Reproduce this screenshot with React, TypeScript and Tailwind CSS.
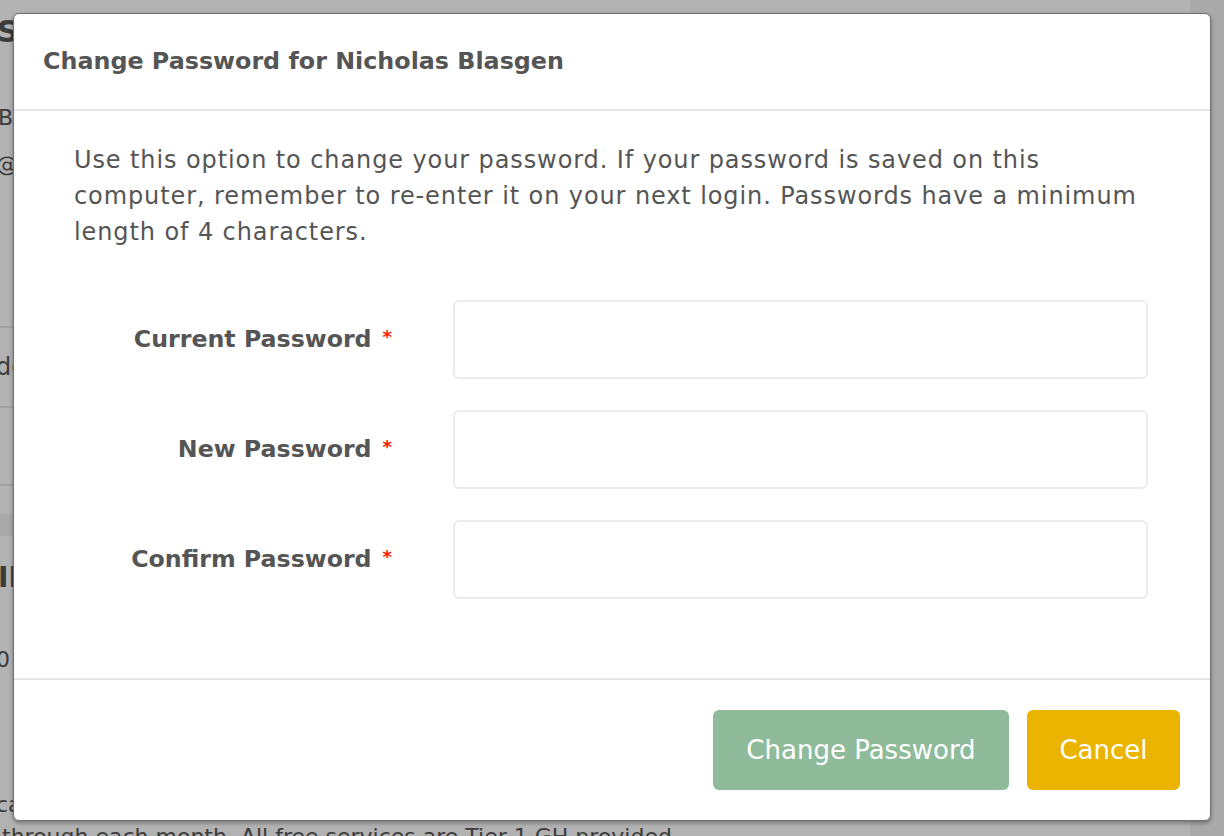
import React from "react";

const font = { fontFamily: '"DejaVu Sans", "Noto Sans", sans-serif' };

function Field({ label }: { label: string }) {
  return (
    <div className="flex items-center">
      <div className="w-[318px] shrink-0 text-right text-[23.7px] font-bold text-[#555555] leading-none whitespace-nowrap">
        {label}
        <span className="relative -top-[4px] ml-[11px] text-[18px] text-[#ff1a00]">*</span>
      </div>
      <div className="ml-[61px] flex-1 h-[79px] rounded-[6px] border-2 border-[#ececec] bg-white" />
    </div>
  );
}

export default function App() {
  return (
    <div className="relative w-[1224px] h-[836px] overflow-hidden bg-white" style={font}>
      {/* background page */}
      <div className="flex h-full">
        <div className="flex-1 text-[#555555] whitespace-nowrap">
          <div className="h-[14px]" />
          <div className="text-[30px] font-bold leading-[36px] -ml-[3px]">Security</div>
          <div className="mt-[53px] text-[22px] leading-[30px] -ml-[2px]">Basic</div>
          <div className="mt-[17px] text-[22px] leading-[30px] -ml-[4px]">@</div>
          <div className="mt-[146px] h-[2px] bg-[#e6e6e6]" />
          <div className="h-[78px] flex items-center text-[24px] -ml-[4px]">domain</div>
          <div className="h-[2px] bg-[#e6e6e6]" />
          <div className="h-[76px]" />
          <div className="h-[2px] bg-[#e6e6e6]" />
          <div className="mt-[28px] h-[22px] bg-[#f2f2f2]" />
          <div className="mt-[24px] text-[28px] font-bold leading-[36px] -ml-[2px]">IP Access</div>
          <div className="mt-[49px] text-[22px] leading-[30px] -ml-[4px]">0</div>
          <div className="mt-[115px] text-[22px] leading-[30px] -ml-[4px]">cap</div>
          <div className="mt-[2px] text-[22px] leading-[30px] ml-[2px]">through each month. All free services are Tier 1 GH provided</div>
        </div>
        <div className="w-[34px] bg-[#f2f2f2]" />
      </div>
      {/* overlay */}
      <div className="absolute inset-0 bg-black/30" />
      {/* modal */}
      <div className="absolute left-[13px] top-[13px] w-[1198px] h-[808px] rounded-[6px] border border-[#6f6f6f] bg-white flex flex-col shadow-[0_2px_4px_rgba(0,0,0,0.35)] overflow-hidden">
        <div className="h-[97px] shrink-0 flex items-center pl-[29px] border-b-2 border-[#e5e5e5]">
          <h1 className="text-[23.8px] font-bold text-[#555555]">Change Password for Nicholas Blasgen</h1>
        </div>
        <div className="flex-1 px-[60px] pt-[31px] border-b-2 border-[#e5e5e5]">
          <p className="text-[24px] leading-[36px] tracking-[0.9px] text-[#555555]">
            <span className="block whitespace-nowrap">Use this option to change your password. If your password is saved on this</span>
            <span className="block whitespace-nowrap">computer, remember to re-enter it on your next login. Passwords have a minimum</span>
            <span className="block whitespace-nowrap">length of 4 characters.</span>
          </p>
          <div className="mt-[50px] flex flex-col gap-[31px] pr-[2px]">
            <Field label="Current Password" />
            <Field label="New Password" />
            <Field label="Confirm Password" />
          </div>
        </div>
        <div className="h-[140px] shrink-0 flex items-center justify-end gap-[18px] pr-[30px]">
          <button className="w-[296px] h-[80px] rounded-[6px] bg-[#8fbb9a] text-white text-[26px]">Change Password</button>
          <button className="w-[153px] h-[80px] rounded-[6px] bg-[#ebb400] text-white text-[26px]">Cancel</button>
        </div>
      </div>
    </div>
  );
}
